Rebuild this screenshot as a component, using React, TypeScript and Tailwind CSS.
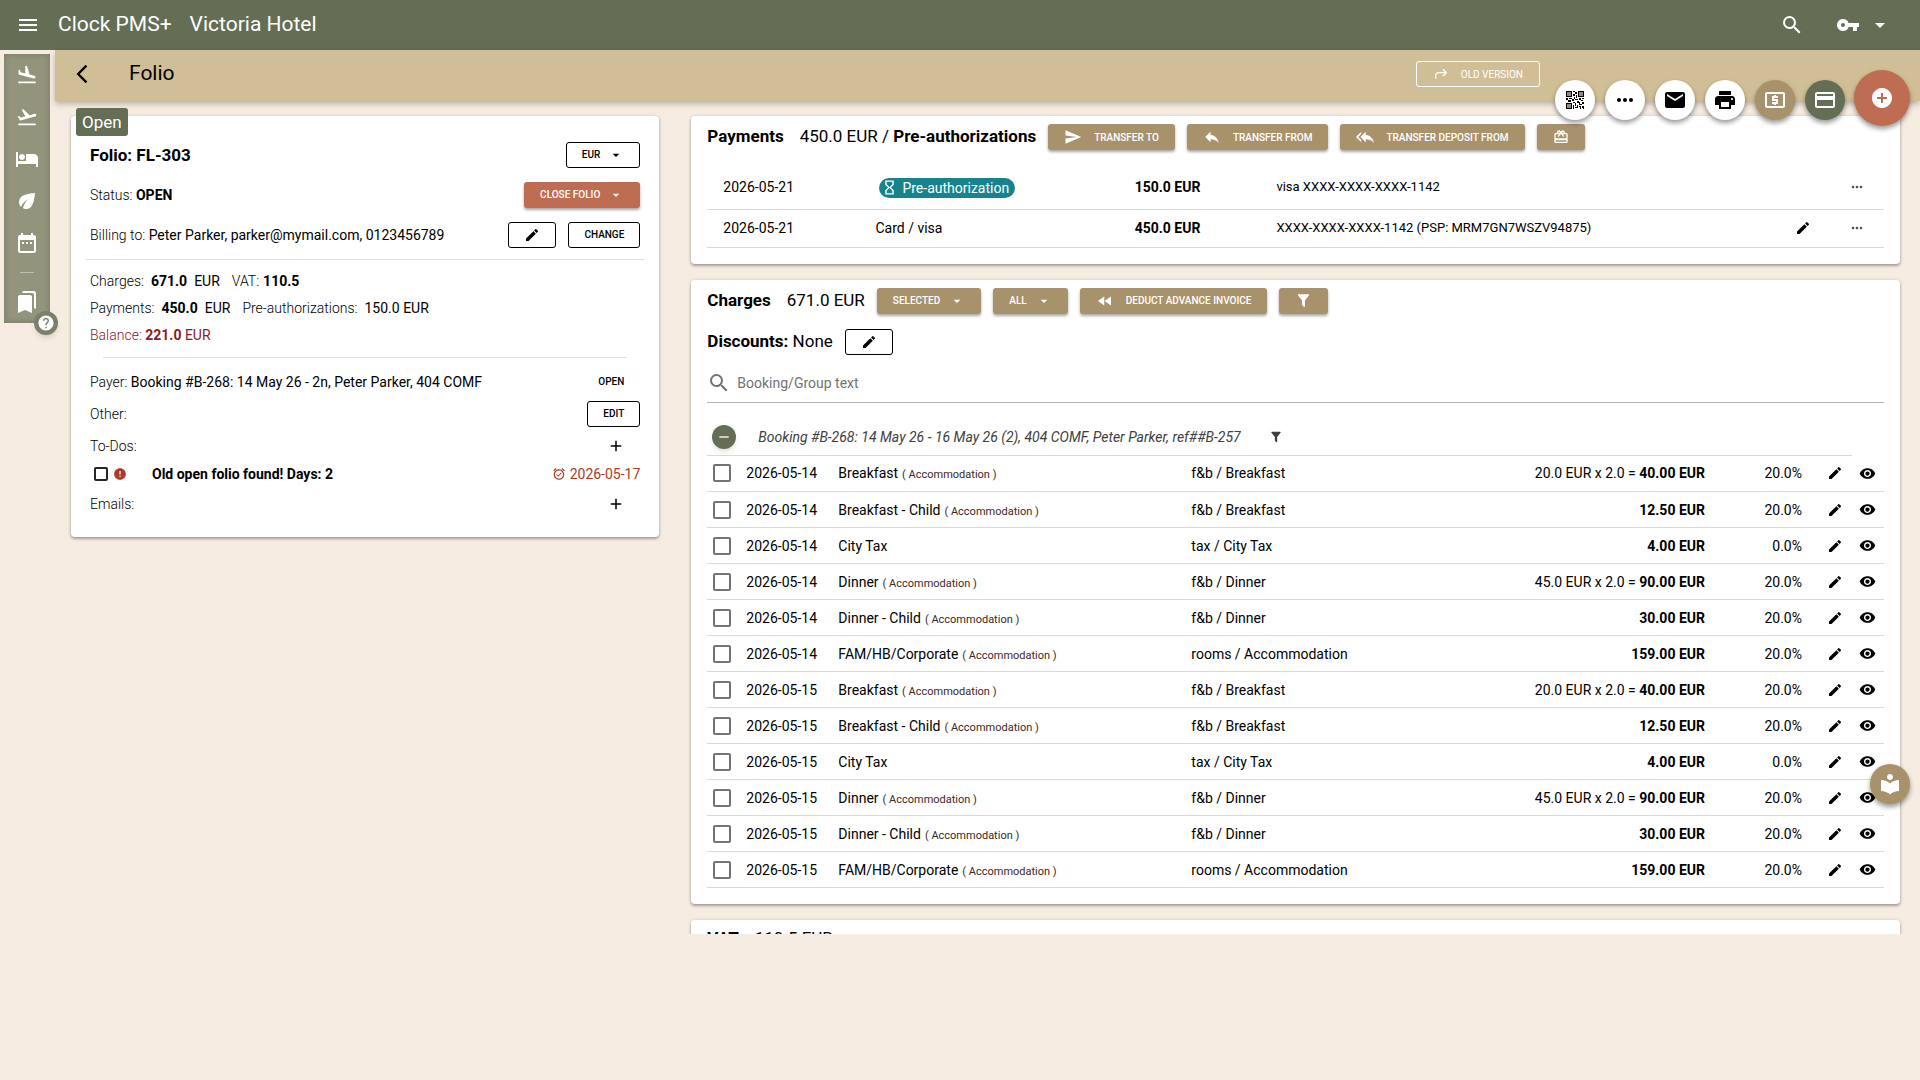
import type { ReactNode } from "react";
import {
  MdAdd,
  MdAddCircle,
  MdAlarmOn,
  MdArrowBackIosNew,
  MdArrowDropDown,
  MdBookmarks,
  MdCardGiftcard,
  MdCreditCard,
  MdDateRange,
  MdEco,
  MdEdit,
  MdEmail,
  MdError,
  MdFastRewind,
  MdFlightLand,
  MdFlightTakeoff,
  MdHelp,
  MdHotel,
  MdHourglassEmpty,
  MdLocalAtm,
  MdLocalLibrary,
  MdMenu,
  MdMoreHoriz,
  MdPrint,
  MdRemove,
  MdReply,
  MdReplyAll,
  MdSearch,
  MdSend,
  MdVisibility,
  MdVpnKey,
} from "react-icons/md";

type Charge = {
  date: string;
  name: string;
  accommodation?: boolean;
  category: string;
  formula?: string;
  total: string;
  vat: string;
};

const dayCharges = (date: string): Charge[] => [
  { date, name: "Breakfast", accommodation: true, category: "f&b / Breakfast", formula: "20.0 EUR x 2.0 =", total: "40.00 EUR", vat: "20.0%" },
  { date, name: "Breakfast - Child", accommodation: true, category: "f&b / Breakfast", total: "12.50 EUR", vat: "20.0%" },
  { date, name: "City Tax", category: "tax / City Tax", total: "4.00 EUR", vat: "0.0%" },
  { date, name: "Dinner", accommodation: true, category: "f&b / Dinner", formula: "45.0 EUR x 2.0 =", total: "90.00 EUR", vat: "20.0%" },
  { date, name: "Dinner - Child", accommodation: true, category: "f&b / Dinner", total: "30.00 EUR", vat: "20.0%" },
  { date, name: "FAM/HB/Corporate", accommodation: true, category: "rooms / Accommodation", total: "159.00 EUR", vat: "20.0%" },
];

const charges = [...dayCharges("2026-05-14"), ...dayCharges("2026-05-15")];

function FilterIcon({ size }: { size: number }) {
  return (
    <svg width={size} height={size} viewBox="0 0 24 24" fill="currentColor" aria-hidden="true">
      <path d="M14,12V19.88C14.04,20.18 13.94,20.5 13.71,20.71C13.32,21.1 12.69,21.1 12.3,20.71L10.29,18.7C10.06,18.47 9.96,18.16 10,17.87V12H9.97L4.21,4.62C3.87,4.19 3.95,3.56 4.38,3.22C4.57,3.08 4.78,3 5,3H19C19.22,3 19.43,3.08 19.62,3.22C20.05,3.56 20.13,4.19 19.79,4.62L14.03,12H14Z" />
    </svg>
  );
}

function ArrowRightTopIcon({ size }: { size: number }) {
  return (
    <svg width={size} height={size} viewBox="0 0 24 24" fill="none" stroke="currentColor" strokeWidth="2" aria-hidden="true">
      <path d="M4 19v-4c0-3 2-5 5-5h11M15 5l5 5-5 5" />
    </svg>
  );
}

function QrIcon() {
  return (
    <svg width={18} height={18} viewBox="0 0 18 18" shapeRendering="crispEdges" aria-hidden="true">
      <path
        fill="currentColor"
        d="M0 0h6v6H0zM12 0h6v6h-6zM0 12h6v6H0zM7 0h2v1H7zM9 1h2v2H9zM7 3h2v2H7zM10 4h1v3h-1zM0 7h2v2H0zM3 7h3v1H3zM2 9h3v2H2zM6 8h2v2H6zM8 6h1v2H8zM9 8h3v1H9zM13 7h2v2h-2zM16 7h2v1h-2zM15 9h2v1h-2zM11 10h2v2h-2zM7 11h2v1H7zM9 12h1v3H9zM7 14h1v4H7zM13 11h1v3h-1zM14 13h2v1h-2zM16 11h2v2h-2zM11 14h1v2h-1zM9 16h3v1H9zM13 15h2v1h-2zM14 16h1v2h-1zM16 15h2v3h-1v-1h-1z"
      />
      <path fill="#8a8a8a" d="M2 2h2v2H2zM14 2h2v2h-2zM2 14h2v2H2z" />
      <path fill="none" stroke="#8a8a8a" strokeWidth="1" d="M1.5 1.5h3v3h-3zM13.5 1.5h3v3h-3zM1.5 13.5h3v3h-3z" />
    </svg>
  );
}

function OutlineButton({ label, className = "", children }: { label?: string; className?: string; children: ReactNode }) {
  return (
    <button
      type="button"
      aria-label={label}
      className={`flex h-[26px] items-center justify-center rounded-[3px] border border-black px-[15px] text-[10px] font-medium ${className}`}
    >
      {children}
    </button>
  );
}

function SolidButton({ label, className = "bg-[#a8926c]", children }: { label?: string; className?: string; children: ReactNode }) {
  return (
    <button
      type="button"
      aria-label={label}
      className={`flex h-[26px] items-center justify-center rounded-[3px] px-4 text-[10px] font-medium whitespace-nowrap text-white shadow-[0_2px_3px_rgba(0,0,0,0.35)] ${className}`}
    >
      {children}
    </button>
  );
}

function RoundButton({ label, className, children }: { label: string; className: string; children: ReactNode }) {
  return (
    <button
      type="button"
      aria-label={label}
      className={`flex size-10 items-center justify-center rounded-full shadow-[0_3px_5px_rgba(0,0,0,0.4)] ${className}`}
    >
      {children}
    </button>
  );
}

function Card({ className = "", children }: { className?: string; children: ReactNode }) {
  return (
    <section className={`rounded bg-white shadow-[0_2px_3px_rgba(0,0,0,0.3),0_0_4px_rgba(0,0,0,0.12)] ${className}`}>
      {children}
    </section>
  );
}

function Sidebar() {
  return (
    <nav className="relative mt-1 ml-1 flex h-[269px] w-[46px] shrink-0 flex-col items-center bg-[#92947c] text-white shadow-[inset_0_0_6px_rgba(0,0,0,0.2)]">
      {[
        { name: "Arrivals", icon: <MdFlightLand size={22} /> },
        { name: "Departures", icon: <MdFlightTakeoff size={22} /> },
        { name: "Rooms", icon: <MdHotel size={24} /> },
        { name: "Housekeeping", icon: <MdEco size={24} /> },
        { name: "Calendar", icon: <MdDateRange size={24} /> },
      ].map((item) => (
        <a key={item.name} href="#" aria-label={item.name} className="flex h-[42px] items-center">
          {item.icon}
        </a>
      ))}
      <hr className="my-2 w-[14px] border-white/40" />
      <a href="#" aria-label="Bookmarks" className="flex h-[42px] items-center">
        <MdBookmarks size={24} />
      </a>
      <button
        type="button"
        aria-label="Help"
        className="absolute -right-2 -bottom-3 flex size-6 items-center justify-center rounded-full bg-[#7c8069] shadow-md"
      >
        <MdHelp size={18} />
      </button>
    </nav>
  );
}

function FolioCard() {
  return (
    <Card className="relative mx-4 px-[19px] pt-[26px] pb-[21px] text-sm">
      <span className="absolute -top-2 left-[5px] rounded-[3px] bg-[#636e55] px-[6px] text-[17px] leading-7 text-white">Open</span>
      <div className="flex h-[26px] items-center justify-between">
        <h2 className="text-[17px] font-bold">Folio: FL-303</h2>
        <OutlineButton>
          EUR <MdArrowDropDown size={16} className="ml-2" />
        </OutlineButton>
      </div>
      <div className="mt-[14px] flex items-center justify-between">
        <p className="font-light">
          Status: <b className="font-bold">OPEN</b>
        </p>
        <SolidButton className="bg-[#bf6d52]">
          CLOSE FOLIO <MdArrowDropDown size={16} className="ml-2" />
        </SolidButton>
      </div>
      <div className="mt-[14px] flex items-center gap-3">
        <p className="mr-auto font-light">
          Billing to: <span className="font-normal">Peter Parker, parker@mymail.com, 0123456789</span>
        </p>
        <OutlineButton label="Edit billing">
          <MdEdit size={16} />
        </OutlineButton>
        <OutlineButton>CHANGE</OutlineButton>
      </div>
      <hr className="-mx-1 mt-[11px] border-black/12" />
      <div className="mt-2 leading-[27px] font-light">
        <p className="flex">
          Charges: <b className="mx-[7px] font-bold">671.0</b> <span className="mr-3 font-normal">EUR</span> VAT:
          <b className="ml-1 font-bold">110.5</b>
        </p>
        <p className="flex">
          Payments: <b className="mx-[7px] font-bold">450.0</b> <span className="mr-3 font-normal">EUR</span> Pre-authorizations:
          <span className="ml-[7px] font-normal">150.0 EUR</span>
        </p>
        <p className="text-[#8b1a2b]">
          Balance: <b className="font-bold">221.0</b> <span className="font-normal">EUR</span>
        </p>
      </div>
      <hr className="mx-[13px] mt-2 border-black/12" />
      <div className="mt-3 flex h-6 items-center justify-between">
        <p className="font-light">
          Payer: <span className="font-normal">Booking #B-268: 14 May 26 - 2n, Peter Parker, 404 COMF</span>
        </p>
        <button type="button" className="px-4 text-[10px] font-medium">
          OPEN
        </button>
      </div>
      <div className="mt-[7px] flex items-center justify-between">
        <p className="font-light">Other:</p>
        <OutlineButton>EDIT</OutlineButton>
      </div>
      <div className="mt-[7px] flex h-6 items-center justify-between">
        <p className="font-light">To-Dos:</p>
        <button type="button" aria-label="Add to-do" className="px-[15px]">
          <MdAdd size={18} />
        </button>
      </div>
      <div className="mt-1 flex h-6 items-center">
        <label className="flex items-center font-bold">
          <input type="checkbox" className="ml-1 size-[14px] appearance-none rounded-[2px] border-2 border-neutral-800" />
          <MdError size={14} className="mr-[25px] ml-[5px] text-[#ad3a25]" />
          Old open folio found! Days: 2
        </label>
        <span className="ml-auto flex items-center gap-1 text-[#ad3a25]">
          <MdAlarmOn size={14} /> 2026-05-17
        </span>
      </div>
      <div className="mt-[6px] flex h-6 items-center justify-between">
        <p className="font-light">Emails:</p>
        <button type="button" aria-label="Add email" className="px-[15px]">
          <MdAdd size={18} />
        </button>
      </div>
    </Card>
  );
}

function PaymentsCard() {
  return (
    <Card className="px-4 pt-2 pb-4">
      <div className="flex gap-3">
        <h2 className="text-[17px] leading-6">
          <b className="mr-4 font-bold">Payments</b>
          450.0 EUR / <b className="font-bold">Pre-authorizations</b>
        </h2>
        <SolidButton>
          <MdSend size={18} className="mr-3" /> TRANSFER TO
        </SolidButton>
        <SolidButton>
          <MdReply size={18} className="mr-3" /> TRANSFER FROM
        </SolidButton>
        <SolidButton>
          <MdReplyAll size={18} className="mr-3" /> TRANSFER DEPOSIT FROM
        </SolidButton>
        <SolidButton label="Gift card">
          <MdCardGiftcard size={16} />
        </SolidButton>
      </div>
      <table className="mt-4 w-full table-fixed text-sm">
        <colgroup>
          <col className="w-1/7" />
          <col className="w-[17%]" />
          <col className="w-[13%]" />
          <col />
          <col className="w-[54px]" />
          <col className="w-[54px]" />
        </colgroup>
        <tbody>
          <tr className="h-[43px] border-b border-black/15">
            <td className="pl-4">2026-05-21</td>
            <td>
              <span className="ml-1 inline-flex h-5 items-center gap-1 rounded-full bg-[#17848d] pr-[6px] pl-[2px] align-middle text-white">
                <MdHourglassEmpty size={17} /> Pre-authorization
              </span>
            </td>
            <td className="pr-7 text-right font-bold">150.0 EUR</td>
            <td className="pl-12 text-[13px]">visa XXXX-XXXX-XXXX-1142</td>
            <td />
            <td>
              <button type="button" aria-label="More" className="mx-auto flex text-neutral-600">
                <MdMoreHoriz size={16} />
              </button>
            </td>
          </tr>
          <tr className="h-[38px] border-b border-black/15">
            <td className="pl-4">2026-05-21</td>
            <td>Card / visa</td>
            <td className="pr-7 text-right font-bold">450.0 EUR</td>
            <td className="pl-12 text-[13px]">XXXX-XXXX-XXXX-1142 (PSP: MRM7GN7WSZV94875)</td>
            <td>
              <button type="button" aria-label="Edit payment" className="mx-auto flex">
                <MdEdit size={16} />
              </button>
            </td>
            <td>
              <button type="button" aria-label="More" className="mx-auto flex text-neutral-600">
                <MdMoreHoriz size={16} />
              </button>
            </td>
          </tr>
        </tbody>
      </table>
    </Card>
  );
}

function ChargesCard() {
  return (
    <Card className="mt-4 px-4 pt-2 pb-4">
      <div className="flex gap-3">
        <h2 className="text-[17px] leading-6">
          <b className="mr-4 font-bold">Charges</b>
          671.0 EUR
        </h2>
        <SolidButton>
          SELECTED <MdArrowDropDown size={16} className="ml-[9px]" />
        </SolidButton>
        <SolidButton>
          ALL <MdArrowDropDown size={16} className="ml-[9px]" />
        </SolidButton>
        <SolidButton>
          <MdFastRewind size={18} className="mr-3" /> DEDUCT ADVANCE INVOICE
        </SolidButton>
        <SolidButton label="Filter charges">
          <FilterIcon size={17} />
        </SolidButton>
      </div>
      <div className="mt-[15px] flex gap-3">
        <p className="text-[17px] leading-6">
          <b className="font-bold">Discounts:</b> None
        </p>
        <OutlineButton label="Edit discounts">
          <MdEdit size={16} />
        </OutlineButton>
      </div>
      <label className="mt-2 flex h-10 items-center border-b border-black/30 pt-[2px] text-neutral-500">
        <MdSearch size={24} className="mr-[6px]" />
        <input
          type="text"
          aria-label="Booking/Group text"
          placeholder="Booking/Group text"
          className="grow text-sm outline-none placeholder:text-neutral-500"
        />
      </label>
      <div className="mt-[17px] mr-8 flex h-9 items-center border-b border-black/15">
        <button
          type="button"
          aria-label="Collapse booking"
          className="ml-[5px] flex size-6 items-center justify-center rounded-full bg-[#636e55] text-white shadow-md"
        >
          <MdRemove size={16} />
        </button>
        <span className="mr-7 ml-[22px] text-sm text-neutral-700 italic">
          Booking #B-268: 14 May 26 - 16 May 26 (2), 404 COMF, Peter Parker, ref##B-257
        </span>
        <button type="button" aria-label="Filter booking" className="text-neutral-700">
          <FilterIcon size={14} />
        </button>
      </div>
      <table className="w-full table-fixed text-sm">
        <colgroup>
          <col className="w-[39px]" />
          <col className="w-[92px]" />
          <col className="w-[30%]" />
          <col />
          <col className="w-[240px]" />
          <col className="w-[97px]" />
          <col className="w-[49px]" />
          <col className="w-[33px]" />
        </colgroup>
        <tbody>
          {charges.map((charge, index) => (
            <tr key={index} className="h-9 border-b border-black/15">
              <td>
                <input
                  type="checkbox"
                  aria-label={`Select ${charge.name}`}
                  className="ml-[6px] block size-[18px] appearance-none rounded-[2px] border-2 border-neutral-500"
                />
              </td>
              <td>{charge.date}</td>
              <td>
                {charge.name}
                {charge.accommodation && <span className="ml-1 text-[11px] text-[#3e2723]">( Accommodation )</span>}
              </td>
              <td>{charge.category}</td>
              <td className="text-right">
                {charge.formula} <b className="font-bold">{charge.total}</b>
              </td>
              <td className="text-right">{charge.vat}</td>
              <td>
                <button type="button" aria-label="Edit charge" className="ml-auto flex pr-2">
                  <MdEdit size={16} />
                </button>
              </td>
              <td>
                <button type="button" aria-label="View charge" className="ml-auto flex pr-2">
                  <MdVisibility size={17} />
                </button>
              </td>
            </tr>
          ))}
        </tbody>
      </table>
    </Card>
  );
}

function FloatingActions() {
  return (
    <div className="absolute top-[70px] right-[10px] flex items-center gap-[9px]">
      <div className="mt-1 flex gap-[10px]">
        <RoundButton label="QR code" className="bg-white text-black">
          <QrIcon />
        </RoundButton>
        <RoundButton label="More actions" className="bg-white text-black">
          <MdMoreHoriz size={24} />
        </RoundButton>
        <RoundButton label="Send email" className="bg-white text-black">
          <MdEmail size={24} />
        </RoundButton>
        <RoundButton label="Print" className="bg-white text-black">
          <MdPrint size={24} />
        </RoundButton>
        <RoundButton label="Cash payment" className="bg-[#a8926c] text-white">
          <MdLocalAtm size={24} />
        </RoundButton>
        <RoundButton label="Card payment" className="bg-[#636e55] text-white">
          <MdCreditCard size={24} />
        </RoundButton>
      </div>
      <button
        type="button"
        aria-label="Add charge"
        className="flex size-14 items-center justify-center rounded-full bg-[#bf6d52] text-white shadow-[0_3px_5px_rgba(0,0,0,0.4)]"
      >
        <MdAddCircle size={24} />
      </button>
    </div>
  );
}

export default function App() {
  return (
    <div className="relative min-h-screen bg-[#f6ece2] font-[Roboto,sans-serif] text-black">
      <header className="flex h-[50px] items-center bg-[#636e55] px-4 text-[21px] text-white">
        <button type="button" aria-label="Menu">
          <MdMenu size={24} />
        </button>
        <span className="ml-[18px]">Clock PMS+</span>
        <span className="ml-[18px]">Victoria Hotel</span>
        <button type="button" aria-label="Search" className="mr-8 ml-auto">
          <MdSearch size={24} />
        </button>
        <button type="button" aria-label="Account" className="mr-3 flex items-center gap-2">
          <MdVpnKey size={24} />
          <MdArrowDropDown size={24} />
        </button>
      </header>
      <div className="flex">
        <Sidebar />
        <main className="ml-[5px] min-w-0 grow">
          <div className="flex h-[51px] items-center bg-[#d0be96] px-4 pb-[3px] shadow-[0_3px_6px_rgba(0,0,0,0.25)]">
            <a href="#" aria-label="Back">
              <MdArrowBackIosNew size={22} />
            </a>
            <h1 className="ml-9 text-[21px]">Folio</h1>
            <button
              type="button"
              className="mr-[364px] ml-auto flex h-[26px] items-center gap-3 rounded-[3px] border border-white px-4 text-[10px] text-white"
            >
              <ArrowRightTopIcon size={16} /> OLD VERSION
            </button>
          </div>
          <div className="flex h-[833px] overflow-hidden pt-[15px] pr-1">
            <div className="w-1/3">
              <FolioCard />
            </div>
            <div className="w-2/3 px-4">
              <PaymentsCard />
              <ChargesCard />
              <Card className="mt-4 px-4 pt-[6px] pb-4">
                <h2 className="text-[17px] leading-6">
                  <b className="mr-4 font-bold">VAT</b>
                  110.5 EUR
                </h2>
              </Card>
            </div>
          </div>
        </main>
      </div>
      <FloatingActions />
      <div className="absolute top-[764px] right-[10px]">
        <RoundButton label="Library" className="bg-[#a8926c] text-white">
          <MdLocalLibrary size={24} />
        </RoundButton>
      </div>
    </div>
  );
}
